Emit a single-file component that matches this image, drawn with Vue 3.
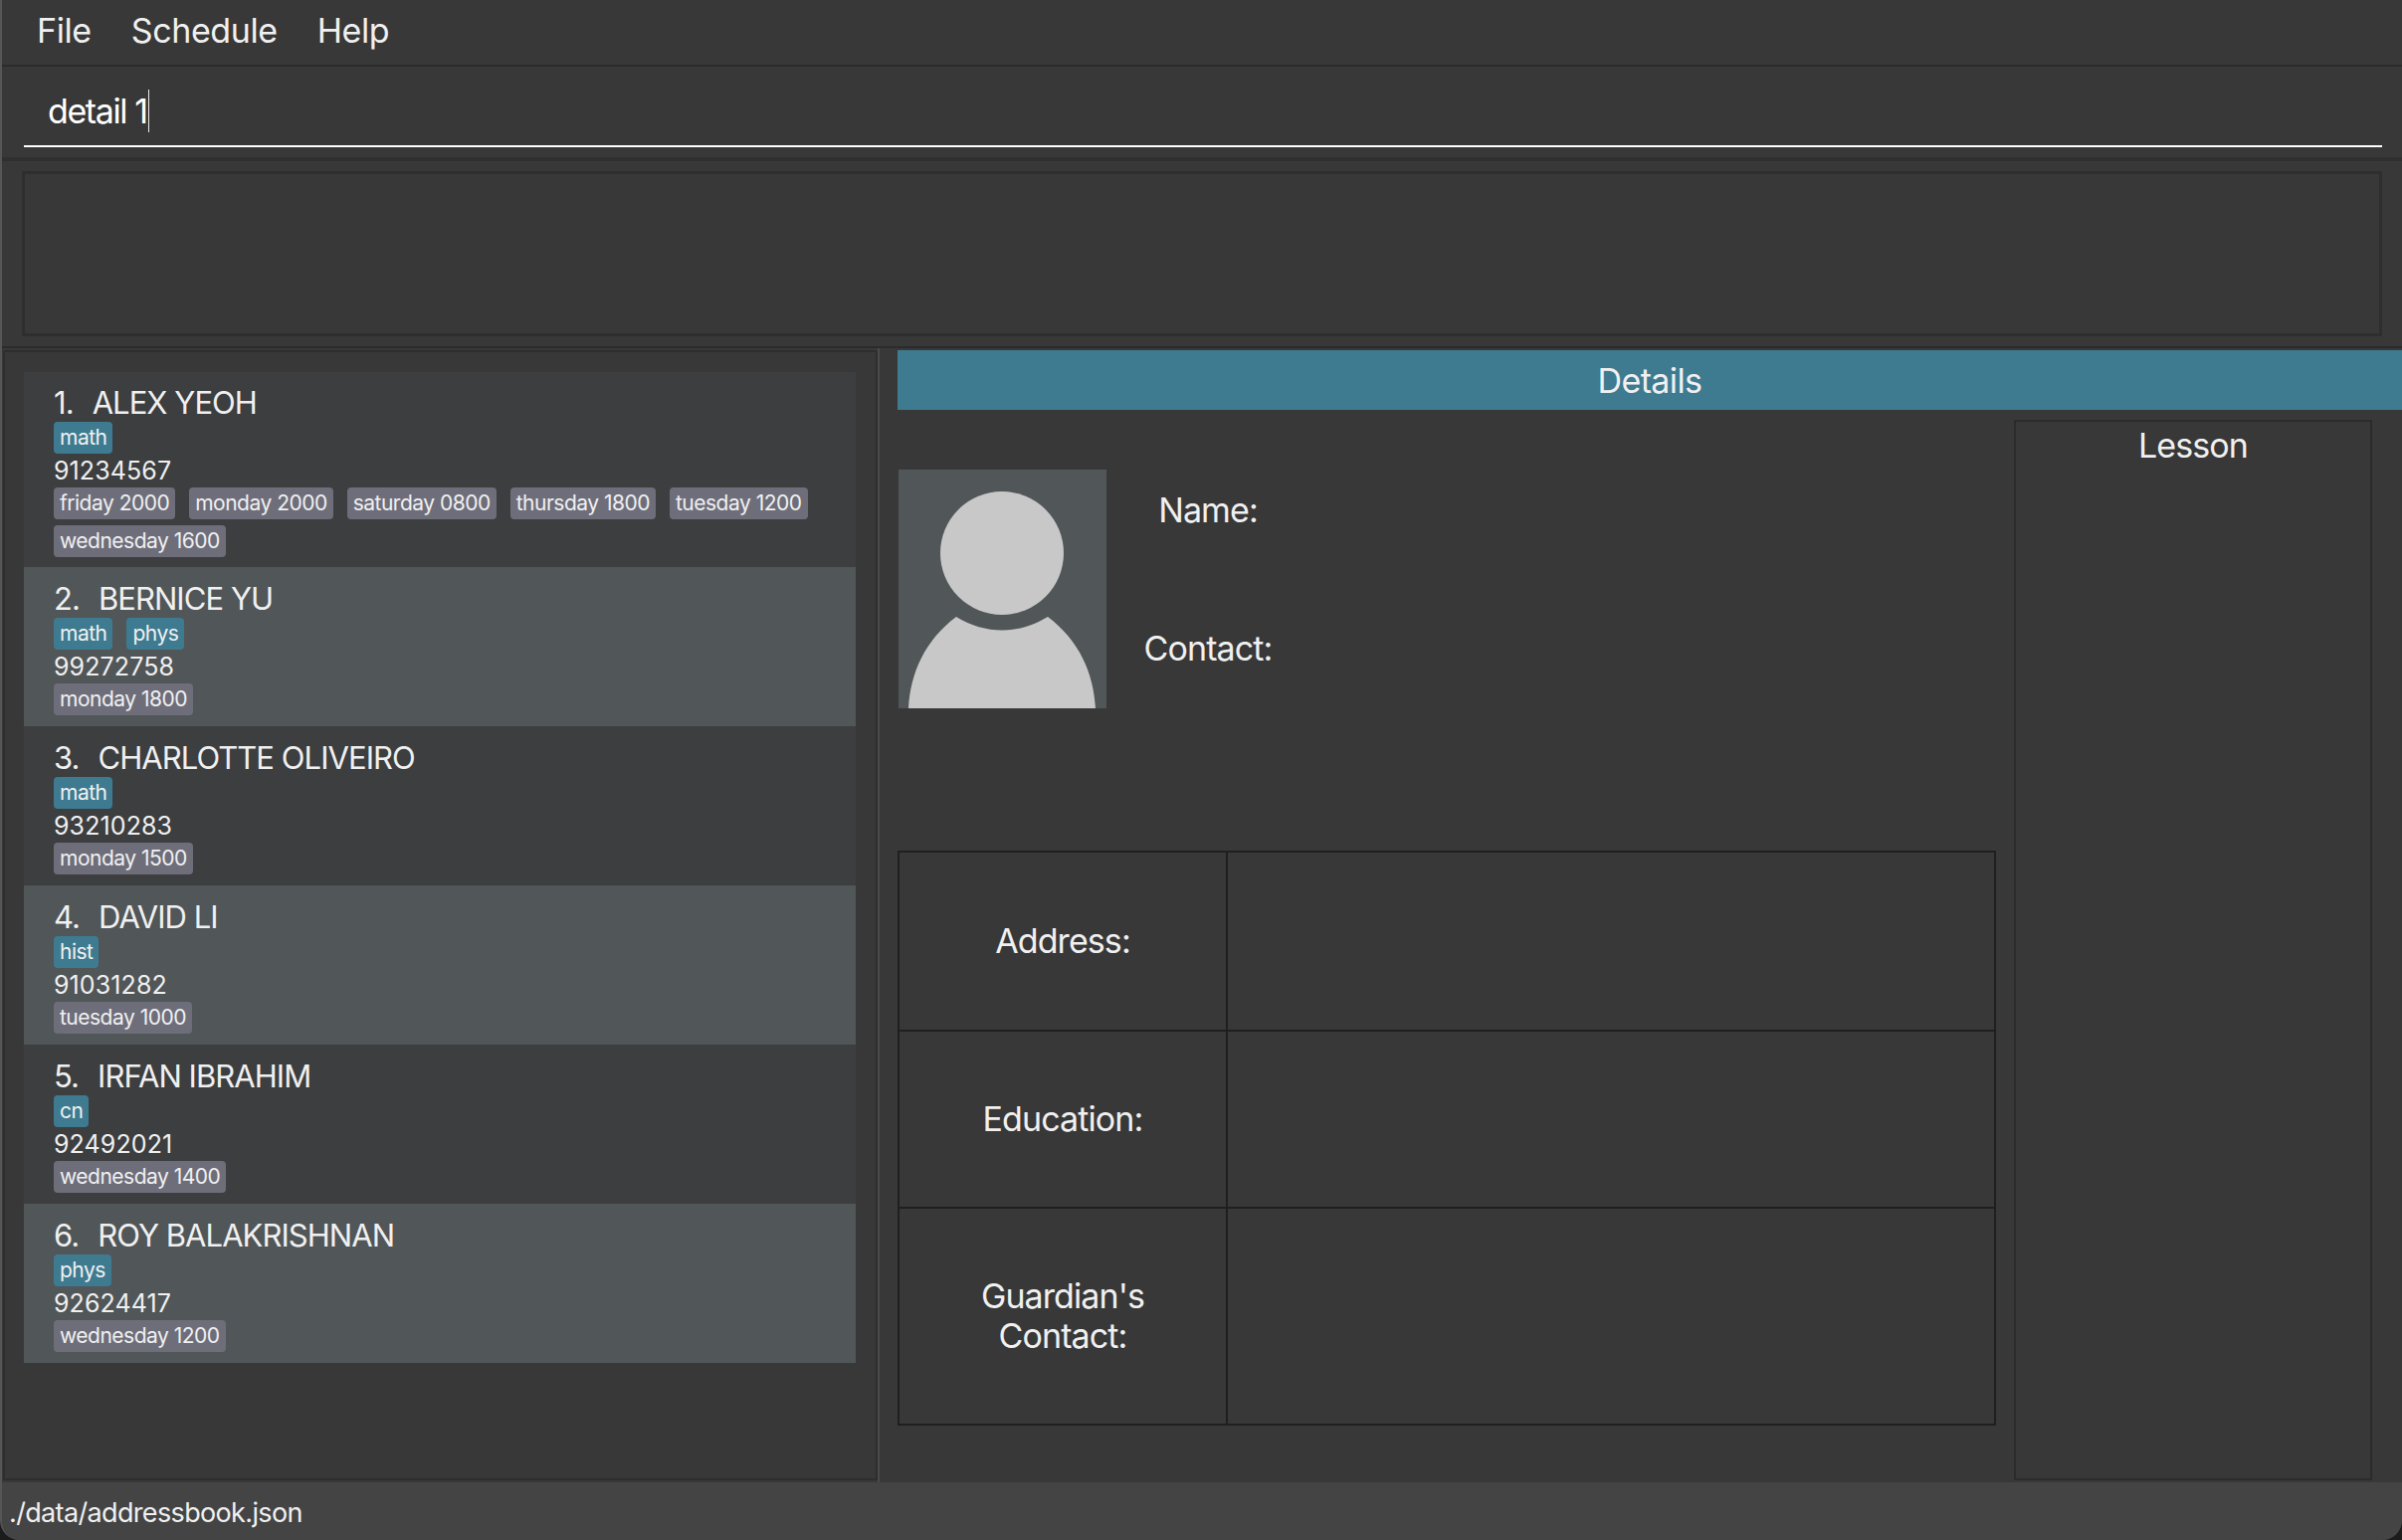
<template>
  <div class="window">
    <!-- MENU -->
    <nav class="menu-bar">
      <span v-for="item in menuItems" :key="item" class="menu-item">{{ item }}</span>
    </nav>

    <!-- COMMAND BOX -->
    <section class="command-section">
      <div class="command-box">
        <span class="command-text">detail 1</span>
      </div>
    </section>

    <!-- RESULT DISPLAY -->
    <section class="result-section">
      <div class="result-box"></div>
    </section>

    <main class="main-area">
      <!-- PERSON LIST -->
      <div class="list-split">
        <aside class="list-panel">
          <div v-for="(person, i) in persons" :key="person.name" class="person-card" :class="{ even: i % 2 === 1 }">
            <div class="person-name"><span class="person-index">{{ i + 1 }}.</span>{{ person.name }}</div>
            <div class="tag-row">
              <span v-for="s in person.subjects" :key="s" class="tag subject">{{ s }}</span>
            </div>
            <div class="person-phone">{{ person.phone }}</div>
            <div class="tag-row">
              <span v-for="t in person.times" :key="t" class="tag time">{{ t }}</span>
            </div>
          </div>
        </aside>
      </div>

      <!-- DETAILS -->
      <section class="details-panel">
        <header class="details-header">Details</header>
        <div class="details-body">
          <div class="details-left">
            <div class="identity">
              <svg class="avatar" viewBox="0 0 209 240" width="209" height="240">
                <rect width="209" height="240" fill="#515658" />
                <circle cx="104" cy="84" r="62" fill="#c8c8c8" />
                <path d="M10 240 C12 205 26 172 58 148 C88 166 120 166 150 148 C182 172 196 205 198 240 Z" fill="#c8c8c8" />
              </svg>
              <div class="identity-labels">
                <div class="label">Name:</div>
                <div class="label">Contact:</div>
              </div>
            </div>
            <div class="info-table">
              <template v-for="row in infoRows" :key="row">
                <div class="info-label">{{ row }}</div>
                <div class="info-value"></div>
              </template>
            </div>
          </div>
          <div class="lesson-box">
            <div class="lesson-title">Lesson</div>
          </div>
        </div>
      </section>
    </main>

    <footer class="status-bar">./data/addressbook.json</footer>
  </div>
</template>

<script setup>
const menuItems = ['File', 'Schedule', 'Help']

const infoRows = ['Address:', 'Education:', "Guardian's Contact:"]

const persons = [
  {
    name: 'ALEX YEOH',
    subjects: ['math'],
    phone: '91234567',
    times: ['friday 2000', 'monday 2000', 'saturday 0800', 'thursday 1800', 'tuesday 1200', 'wednesday 1600']
  },
  { name: 'BERNICE YU', subjects: ['math', 'phys'], phone: '99272758', times: ['monday 1800'] },
  { name: 'CHARLOTTE OLIVEIRO', subjects: ['math'], phone: '93210283', times: ['monday 1500'] },
  { name: 'DAVID LI', subjects: ['hist'], phone: '91031282', times: ['tuesday 1000'] },
  { name: 'IRFAN IBRAHIM', subjects: ['cn'], phone: '92492021', times: ['wednesday 1400'] },
  { name: 'ROY BALAKRISHNAN', subjects: ['phys'], phone: '92624417', times: ['wednesday 1200'] }
]
</script>

<style>
html, body {
  margin: 0;
  background: #1c1c1c;
}
</style>

<style scoped>
* {
  box-sizing: border-box;
}

.window {
  width: 2414px;
  height: 1548px;
  display: flex;
  flex-direction: column;
  background: #383838;
  color: #f0f0f0;
  font-family: Inter, "Noto Sans", sans-serif;
  border-left: 2px solid #565656;
  border-radius: 0 0 20px 20px;
  overflow: hidden;
}

/* MENU */
.menu-bar {
  height: 67px;
  flex: none;
  display: flex;
  align-items: center;
  gap: 40px;
  padding: 0 0 4px 35px;
  border-bottom: 2px solid #2b2b2b;
  font-size: 34px;
  letter-spacing: -0.4px;
}

/* COMMAND */
.command-section {
  height: 95px;
  flex: none;
  padding: 0 20px 0 22px;
  border-bottom: 4px solid #2f2f2f;
}

.command-box {
  height: 81px;
  display: flex;
  align-items: flex-end;
  padding: 0 0 13px 24px;
  border-bottom: 2px solid #ffffff;
  font-size: 34px;
  color: #ffffff;
  letter-spacing: -1.4px;
}

.command-text {
  height: 43px;
  line-height: 43px;
  border-right: 1px solid #e8e8e8;
  padding-right: 1px;
}

/* RESULT */
.result-section {
  height: 188px;
  flex: none;
  padding: 10px 20px 10px 20px;
  border-bottom: 2px solid #2b2b2b;
}

.result-box {
  height: 100%;
  border: 3px solid #2e2e2e;
}

.main-area {
  flex: 1;
  display: flex;
  min-height: 0;
}

/* LIST */
.list-split {
  width: 882px;
  flex: none;
  display: flex;
  padding: 2px 0 2px 1px;
  border-right: 2px solid #4a4a4a;
}

.list-panel {
  flex: 1;
  padding: 20px 20px 0 19px;
  border: 2px solid #2e2e2e;
}

.person-card {
  padding: 11px 30px;
  background: #3c3e3f;
}

.person-card:first-child {
  padding: 10px 30px;
}

.person-card.even {
  background: #515658;
}

.person-name {
  height: 40px;
  line-height: 42px;
  font-size: 31px;
  letter-spacing: -0.95px;
}

.person-index {
  margin-right: 19px;
}

.person-phone {
  height: 34px;
  line-height: 34px;
  font-size: 25px;
  letter-spacing: 0.1px;
}

.tag-row {
  display: flex;
  flex-wrap: wrap;
  gap: 6px 14px;
}

.tag {
  height: 32px;
  line-height: 31px;
  padding: 0 6px;
  border-radius: 4px;
  font-size: 21px;
  letter-spacing: -0.5px;
}

.tag.subject {
  background: #3e7b91;
}

.tag.time {
  background: #6e6e7b;
}

/* DETAILS */
.details-panel {
  flex: 1;
  min-width: 0;
  display: flex;
  flex-direction: column;
  padding-left: 18px;
}

.details-header {
  height: 60px;
  margin-top: 2px;
  flex: none;
  display: flex;
  align-items: center;
  justify-content: center;
  background: #3e7b91;
  font-size: 34px;
  letter-spacing: -0.6px;
}

.details-body {
  flex: 1;
  min-height: 0;
  display: flex;
  gap: 18px;
  padding: 10px 30px 2px 0;
}

.details-left {
  width: 1104px;
  flex: none;
  padding-top: 50px;
}

.identity {
  display: flex;
  height: 383px;
}

.avatar {
  display: block;
  margin-left: 1px;
}

.identity-labels {
  width: 204px;
  padding-top: 21px;
  display: flex;
  flex-direction: column;
  align-items: center;
  gap: 99px;
}

.label,
.info-label,
.lesson-title {
  font-size: 34px;
  letter-spacing: -0.9px;
}

.label {
  line-height: 40px;
}

.info-table {
  display: grid;
  grid-template-columns: 330px 1fr;
  grid-template-rows: 180px 178px 218px;
  border: 2px solid #1f1f1f;
  border-bottom-width: 0;
  border-right-width: 0;
}

.info-label,
.info-value {
  border-right: 2px solid #1f1f1f;
  border-bottom: 2px solid #1f1f1f;
}

.info-label {
  display: flex;
  align-items: center;
  justify-content: center;
  padding: 0 90px;
  text-align: center;
  line-height: 40px;
}

.lesson-box {
  width: 360px;
  flex: none;
  border: 2px solid #2b2b2b;
}

.lesson-title {
  text-align: center;
  line-height: 40px;
  padding-top: 4px;
}

/* STATUS */
.status-bar {
  height: 58px;
  flex: none;
  display: flex;
  align-items: center;
  padding: 2px 0 0 7px;
  background: #444444;
  font-size: 27px;
  letter-spacing: -0.65px;
}
</style>
